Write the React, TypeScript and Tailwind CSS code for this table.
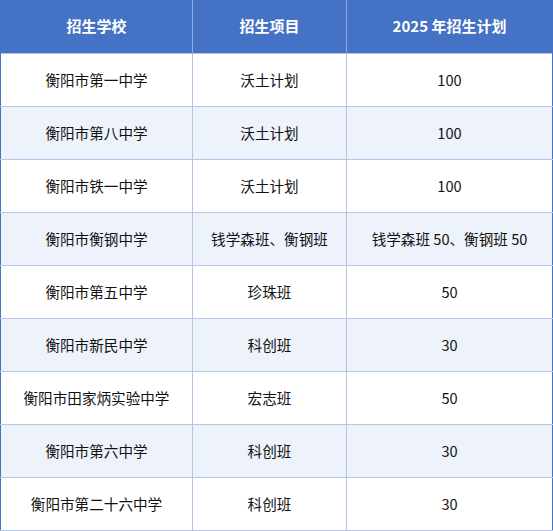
const rows = [
  ['衡阳市第一中学', '沃土计划', '100'],
  ['衡阳市第八中学', '沃土计划', '100'],
  ['衡阳市铁一中学', '沃土计划', '100'],
  ['衡阳市衡钢中学', '钱学森班、衡钢班', '钱学森班 50、衡钢班 50'],
  ['衡阳市第五中学', '珍珠班', '50'],
  ['衡阳市新民中学', '科创班', '30'],
  ['衡阳市田家炳实验中学', '宏志班', '50'],
  ['衡阳市第六中学', '科创班', '30'],
  ['衡阳市第二十六中学', '科创班', '30'],
];

export default function App() {
  return (
    <div className="w-[553px] bg-white font-['Noto_Sans_CJK_SC',sans-serif]">
      <table className="w-full table-fixed border-collapse border-x border-x-[#4472c4] text-[14.6px]">
        <colgroup>
          <col className="w-[192px]" />
          <col className="w-[154px]" />
          <col />
        </colgroup>
        <thead>
          <tr className="h-[53px] bg-[#4472c4] text-[15px] text-white">
            <th className="border-r border-[#8eaadb] font-bold">招生学校</th>
            <th className="border-r border-[#8eaadb] font-bold">招生项目</th>
            <th className="font-bold">2025 年招生计划</th>
          </tr>
        </thead>
        <tbody className="text-[#111]">
          {rows.map((r, i) => (
            <tr key={i} className={`h-[53px] ${i % 2 === 1 ? 'bg-[#eef2fa]' : 'bg-white'}`}>
              {r.map((c, j) => (
                <td key={j} className="border border-[#b4c6e7] text-center first:border-l-[#4472c4] last:border-r-[#4472c4]">
                  {c}
                </td>
              ))}
            </tr>
          ))}
        </tbody>
      </table>
    </div>
  );
}
